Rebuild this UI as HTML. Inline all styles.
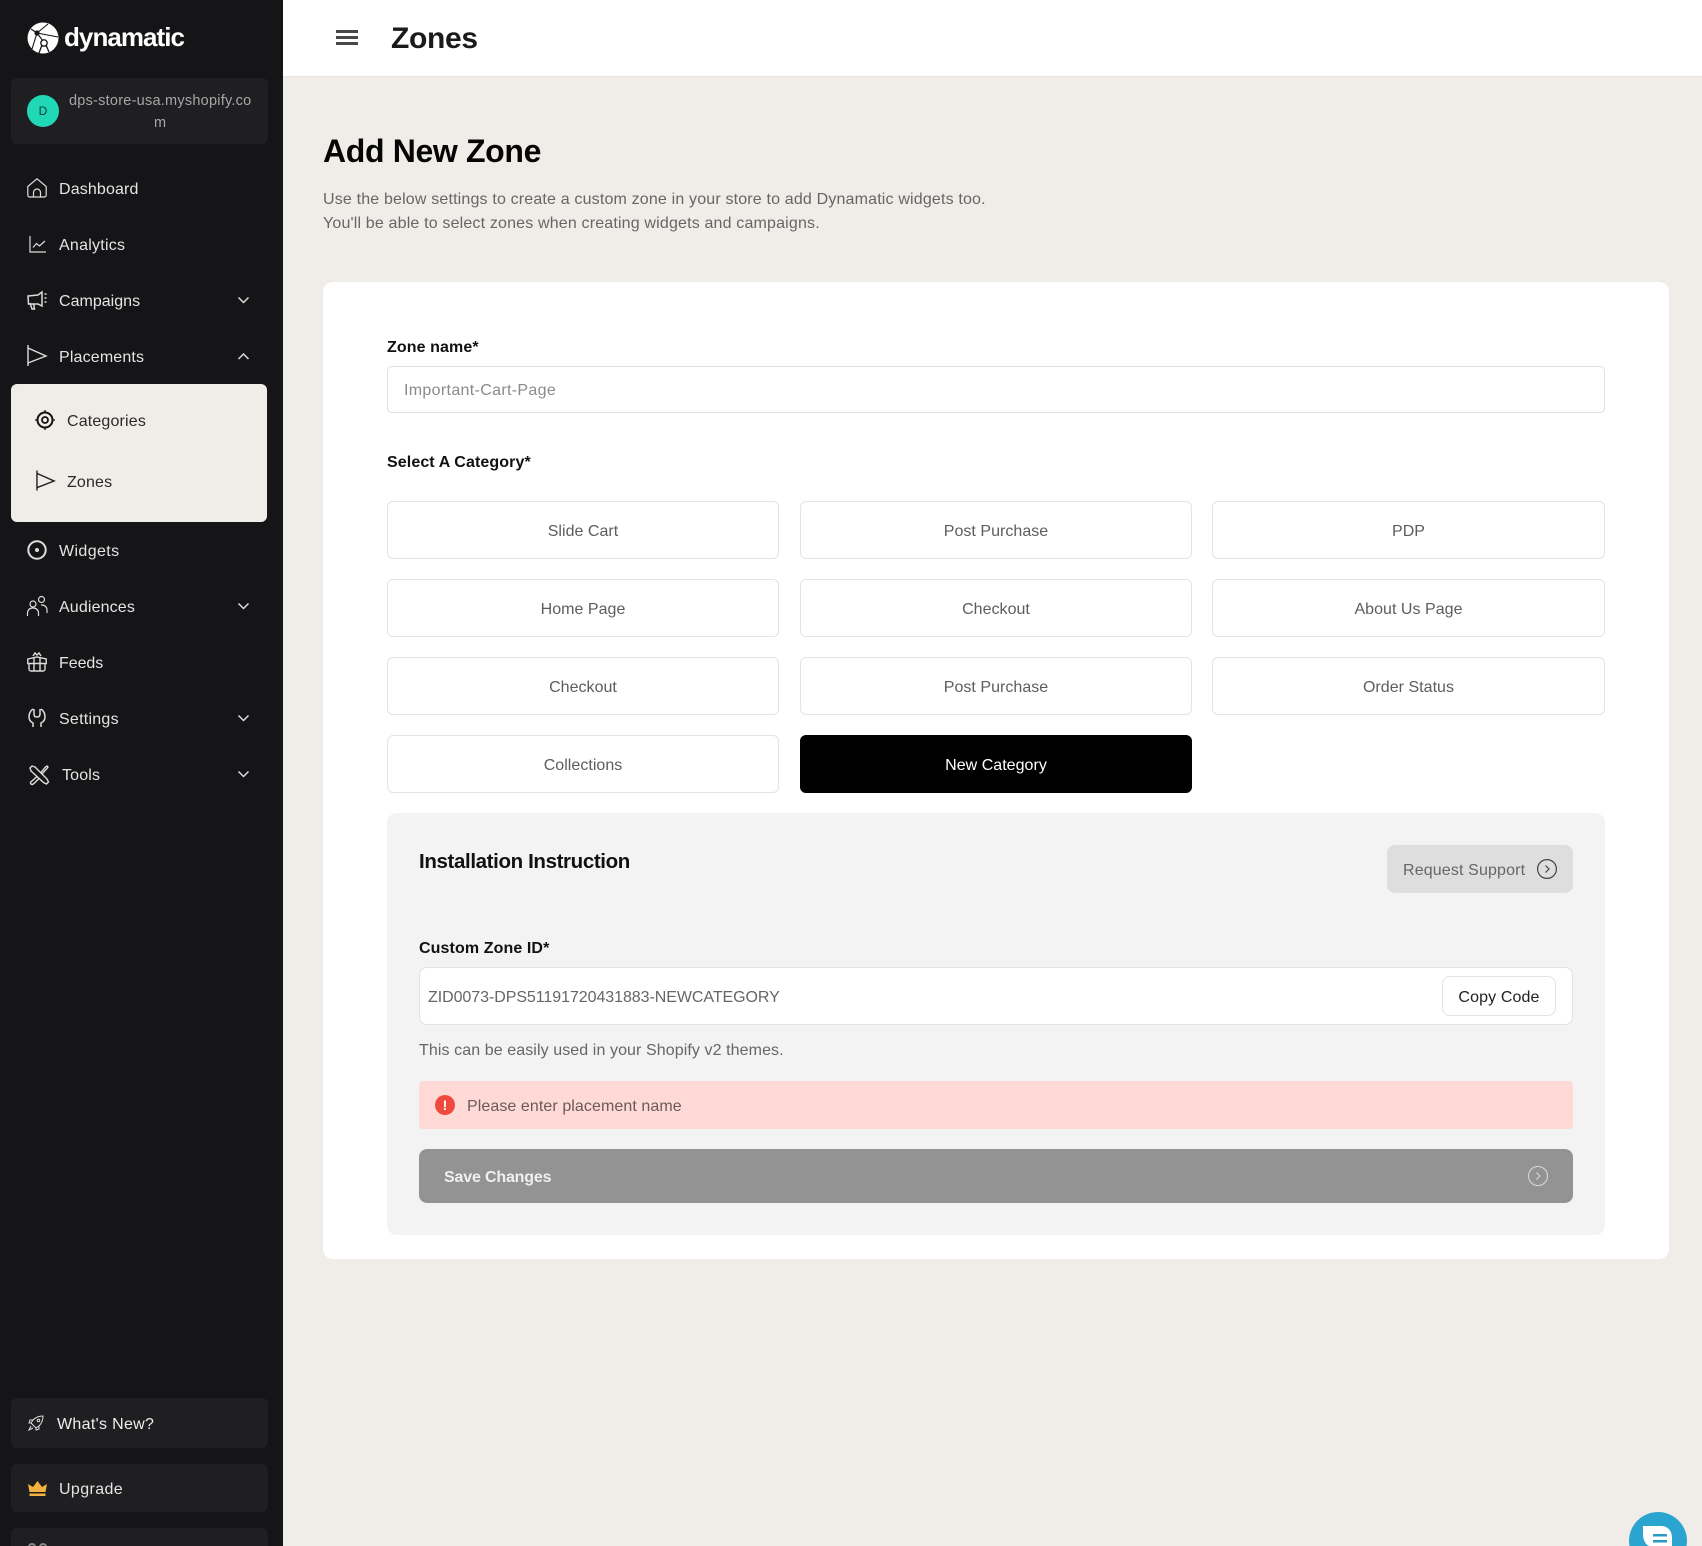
<!DOCTYPE html>
<html><head><meta charset="utf-8"><style>
*{box-sizing:border-box}
html,body{margin:0;padding:0;width:1702px;height:1546px;overflow:hidden}
#p{position:absolute;left:0;top:0;width:1702px;height:1546px;overflow:hidden;background:#f0ede8;font-family:"Liberation Sans",sans-serif}
.a,.t{position:absolute}
.t{white-space:nowrap;line-height:20px;height:20px;font-size:16px;margin-top:1.5px}
svg{position:absolute;overflow:visible}
.nav{color:#e4e4e4;left:59px}
.btn{position:absolute;width:392px;height:58px;background:#fff;border:1px solid #e6e4df;border-radius:6px;color:#5d5d5d;font-size:16px;line-height:59px;text-align:center;letter-spacing:.03px}
.lb{color:#111;font-weight:bold;letter-spacing:.1px}
</style></head><body><div id="p">
<div class="a" style="left:283px;top:0;width:1419px;height:77px;background:#fff;border-bottom:1px solid #e8e6e2"></div>
<div class="a" style="left:0;top:0;width:283px;height:1546px;background:#151517"></div>

<svg style="left:27px;top:22px" width="32" height="32" viewBox="0 0 32 32" fill="none"><circle cx="16" cy="16" r="15.500" fill="#fff"/><path d="M10 11L4 7M10 11L21 2M10 11L31 15M10 11L5 27M10 11L16 19" stroke="#151517" stroke-width="1.100"/><circle cx="10" cy="11" r="2.600" fill="#151517"/><path d="M15 23L12 31M19 23L22 30" stroke="#151517" stroke-width="1.300"/><circle cx="17" cy="21" r="3.200" fill="#fff" stroke="#151517" stroke-width="1.300"/></svg>
<div class="t" style="left:64px;top:25.500px;color:#fff;font-size:26px;font-weight:bold;letter-spacing:-.95px">dynamatic</div>

<div class="a" style="left:11px;top:78px;width:257px;height:66px;background:#1f1f22;border-radius:6px"></div>
<div class="a" style="left:27px;top:95px;width:32px;height:32px;border-radius:50%;background:#20d8b6;color:#0e3b35;font-size:12px;line-height:32px;text-align:center">D</div>
<div class="t" style="left:69px;top:89.500px;color:#a6a6a6;font-size:14.500px;letter-spacing:.24px">dps-store-usa.myshopify.co</div>
<div class="t" style="left:154px;top:111px;color:#a6a6a6;font-size:14.500px">m</div>

<svg style="left:27px;top:178px" width="20" height="20" viewBox="0 0 20 20" fill="none" stroke="#ddd" stroke-width="1.200"><path d="M.8 8.500L10 .8l9.200 7.700V17a2 2 0 0 1-2 2H2.800a2 2 0 0 1-2-2z"/><path d="M6.500 19v-4.500a3.500 3.500 0 0 1 7 0V19"/></svg>
<div class="t nav" style="top:178px;letter-spacing:.14px">Dashboard</div>
<svg style="left:29px;top:236px" width="17" height="17" viewBox="0 0 17 17" fill="none" stroke="#ddd" stroke-width="1.200"><path d="M1 0v16h16M4 11.500l3.500-4 3 2.500L16 5"/></svg>
<div class="t nav" style="top:234px;letter-spacing:.25px">Analytics</div>
<svg style="left:27px;top:290px" width="20" height="20" viewBox="0 0 20 20" fill="none" stroke="#ddd" stroke-width="1.500"><path d="M1 6l10-1 4-3v14l-4-2H1.500zM3 13l2 6h2.500L6.500 13.500M17.500 4h2M17.500 8h2M17.500 12h2"/></svg>
<div class="t nav" style="top:290px;letter-spacing:.02px">Campaigns</div>
<svg style="left:27px;top:346px" width="20" height="20" viewBox="0 0 20 20" fill="none" stroke="#ddd" stroke-width="1.400"><path d="M1 -1v21M1 2l18 8L1 17"/></svg>
<div class="t nav" style="top:346px;letter-spacing:.16px">Placements</div>

<div class="a" style="left:11px;top:384px;width:256px;height:138px;background:#f0ede8;border-radius:6px"></div>
<svg style="left:35px;top:410px" width="20" height="20" viewBox="0 0 20 20" fill="none" stroke="#111"><circle cx="10" cy="10" r="7.500" stroke-width="2"/><circle cx="10" cy="10" r="3" stroke-width="1.800"/><path d="M10 0v2M10 18v2M0 10h2M18 10h2" stroke-width="1.300"/></svg>
<div class="t" style="left:67px;top:410px;color:#2a2a2a;letter-spacing:.16px">Categories</div>
<svg style="left:36px;top:471px" width="19" height="20" viewBox="0 0 20 20" fill="none" stroke="#222" stroke-width="1.500"><path d="M1 -1v21M1 2l18 8L1 17"/></svg>
<div class="t" style="left:67px;top:471px;color:#2a2a2a;letter-spacing:.16px">Zones</div>

<svg style="left:27px;top:540px" width="20" height="20" viewBox="0 0 20 20" fill="none"><circle cx="10" cy="10" r="8.700" stroke="#ddd" stroke-width="2"/><circle cx="10" cy="10" r="2" fill="#ddd"/></svg>
<div class="t nav" style="top:540px;letter-spacing:.38px">Widgets</div>
<svg style="left:27px;top:596px" width="20" height="20" viewBox="0 0 20 20" fill="none" stroke="#ddd" stroke-width="1.200"><circle cx="6" cy="8" r="3"/><circle cx="14.500" cy="3.500" r="3"/><path d="M.5 20v-3a5 5 0 0 1 5-5h1a5 5 0 0 1 5 5v3M14 9h1a5 5 0 0 1 5 5v3"/></svg>
<div class="t nav" style="top:596px;letter-spacing:.14px">Audiences</div>
<svg style="left:27px;top:652px" width="20" height="20" viewBox="0 0 20 20" fill="none" stroke="#ddd" stroke-width="1.400"><path d="M.8 7L10 5l9.200 2v4.500H.8zM2 11.500V17a2 2 0 0 0 2 2h12a2 2 0 0 0 2-2v-5.500M7 5.800V19M13 5.800V19M6 4l2-3 2 2 2-2 2 3"/></svg>
<div class="t nav" style="top:652px;letter-spacing:-.05px">Feeds</div>
<svg style="left:28px;top:708px" width="18" height="20" viewBox="0 0 18 20" fill="none" stroke="#ddd" stroke-width="1.500"><path d="M5 1C2 3 1 6 1 9c0 3 2 5 4 6v4M13 1c3 2 4 5 4 8 0 3-2 5-4 6v4M6 1v5c0 2 1 3 3 3s3-1 3-3V1"/></svg>
<div class="t nav" style="top:708px;letter-spacing:.25px">Settings</div>
<svg style="left:29px;top:765px" width="20" height="20" viewBox="0 0 20 20" fill="none" stroke="#ddd" stroke-width="1.400"><path d="M1 3l2-2 3 1 12 12 1.500 3-2 2-3-1.500L2 6zM12 7.500l4.500-5.500 1.500-1 1 1-1 1.500-5 5.500M8 11.500L3 16c-2 1-2 3 0 3.500 1 0 2-1 2.500-1.500l5-5"/></svg>
<div class="t nav" style="top:764px;left:62px;letter-spacing:.16px">Tools</div>

<svg style="left:238px;top:297px" width="11" height="7" viewBox="0 0 11 7" fill="none" stroke="#ddd" stroke-width="1.500"><path d="M.5.5l5 5 5-5"/></svg>
<svg style="left:238px;top:353px" width="11" height="7" viewBox="0 0 11 7" fill="none" stroke="#ddd" stroke-width="1.500"><path d="M.5 6l5-5 5 5"/></svg>
<svg style="left:238px;top:603px" width="11" height="7" viewBox="0 0 11 7" fill="none" stroke="#ddd" stroke-width="1.500"><path d="M.5.5l5 5 5-5"/></svg>
<svg style="left:238px;top:715px" width="11" height="7" viewBox="0 0 11 7" fill="none" stroke="#ddd" stroke-width="1.500"><path d="M.5.5l5 5 5-5"/></svg>
<svg style="left:238px;top:771px" width="11" height="7" viewBox="0 0 11 7" fill="none" stroke="#ddd" stroke-width="1.500"><path d="M.5.5l5 5 5-5"/></svg>

<div class="a" style="left:11px;top:1398px;width:257px;height:50px;background:#1f1f21;border-radius:6px"></div>
<svg style="left:28px;top:1415px" width="16" height="16" viewBox="0 0 16 16" fill="none" stroke="#ddd" stroke-width="1"><path d="M5 5C8 2 12 1 15 1c0 3-1 7-4 10L8 13 3 8zM5 5H2L1 8h2M11 11v3l-3 1v-2M3 11l-2 4 4-2"/><circle cx="10.500" cy="5.500" r="1.300"/></svg>
<div class="t" style="left:57px;top:1413px;color:#eee;letter-spacing:.32px">What's New?</div>
<div class="a" style="left:11px;top:1464px;width:257px;height:48px;background:#1f1f21;border-radius:6px"></div>
<svg style="left:28px;top:1481px" width="19" height="15" viewBox="0 0 19 15"><path fill="#f2b23e" d="M0 3l5 3 4.500-6L14 6l5-3-1.500 8H1.500zM1.500 12.500h16V15h-16z"/></svg>
<div class="t nav" style="top:1478px;letter-spacing:.38px">Upgrade</div>
<div class="a" style="left:11px;top:1528px;width:257px;height:30px;background:#1f1f21;border-radius:6px"></div>
<svg style="left:28px;top:1544px" width="20" height="4" viewBox="0 0 20 4" fill="none" stroke="#888" stroke-width="2"><path d="M1 3a3 3 0 0 1 6 0M12 3a3 3 0 0 1 6 0"/></svg>

<svg style="left:336px;top:30px" width="22" height="15" viewBox="0 0 22 15"><rect fill="#484848" width="22" height="3" y="0"/><rect fill="#484848" width="22" height="3" y="6"/><rect fill="#484848" width="22" height="3" y="12"/></svg>
<div class="t" style="left:391px;top:27px;color:#1b1b1b;font-size:30px;font-weight:bold;letter-spacing:-.33px">Zones</div>

<div class="t" style="left:323px;top:139px;color:#050505;font-size:32px;font-weight:bold;letter-spacing:-.35px">Add New Zone</div>
<div class="t" style="left:323px;top:188px;color:#666;letter-spacing:.17px">Use the below settings to create a custom zone in your store to add Dynamatic widgets too.</div>
<div class="t" style="left:323px;top:212px;color:#666;letter-spacing:.17px">You'll be able to select zones when creating widgets and campaigns.</div>

<div class="a" style="left:323px;top:282px;width:1346px;height:977px;background:#fff;border-radius:10px"></div>
<div class="t lb" style="left:387px;top:336px">Zone name*</div>
<div class="a" style="left:387px;top:366px;width:1218px;height:47px;background:#fff;border:1px solid #dfdedb;border-radius:5px"></div>
<div class="t" style="left:404px;top:379px;color:#8a8a8a;letter-spacing:.33px">Important-Cart-Page</div>
<div class="t lb" style="left:387px;top:451px">Select A Category*</div>

<div class="btn" style="left:387px;top:501px">Slide Cart</div>
<div class="btn" style="left:800px;top:501px">Post Purchase</div>
<div class="btn" style="left:1212px;top:501px;width:393px">PDP</div>
<div class="btn" style="left:387px;top:579px">Home Page</div>
<div class="btn" style="left:800px;top:579px">Checkout</div>
<div class="btn" style="left:1212px;top:579px;width:393px">About Us Page</div>
<div class="btn" style="left:387px;top:657px">Checkout</div>
<div class="btn" style="left:800px;top:657px">Post Purchase</div>
<div class="btn" style="left:1212px;top:657px;width:393px">Order Status</div>
<div class="btn" style="left:387px;top:735px">Collections</div>
<div class="btn" style="left:800px;top:735px;background:#000;border-color:#000;color:#fff">New Category</div>

<div class="a" style="left:387px;top:813px;width:1218px;height:422px;background:#f3f3f3;border-radius:10px"></div>
<div class="t" style="left:419px;top:850px;color:#111;font-size:20.500px;font-weight:bold;letter-spacing:-.37px">Installation Instruction</div>
<div class="a" style="left:1387px;top:845px;width:186px;height:48px;background:#dedede;border-radius:8px"></div>
<div class="t" style="left:1403px;top:859px;color:#666;letter-spacing:.14px">Request Support</div>
<svg style="left:1537px;top:859px" width="20" height="20" viewBox="0 0 20 20" fill="none" stroke="#444" stroke-width="1.200"><circle cx="10" cy="10" r="9.400"/><path d="M8.500 6.500l3.500 3.500-3.500 3.500"/></svg>
<div class="t lb" style="left:419px;top:937px">Custom Zone ID*</div>
<div class="a" style="left:419px;top:967px;width:1154px;height:58px;background:#fff;border:1px solid #e4e3e0;border-radius:8px"></div>
<div class="t" style="left:428px;top:986px;color:#666;letter-spacing:-.06px">ZID0073-DPS51191720431883-NEWCATEGORY</div>
<div class="a" style="left:1442px;top:976px;width:114px;height:40px;background:#fff;border:1px solid #e4e3e0;border-radius:8px;color:#222;font-size:16px;line-height:41px;text-align:center;letter-spacing:.12px">Copy Code</div>
<div class="t" style="left:419px;top:1039px;color:#666;letter-spacing:.09px">This can be easily used in your Shopify v2 themes.</div>
<div class="a" style="left:419px;top:1081px;width:1154px;height:48px;background:#ffd9d6;border-radius:4px"></div>
<div class="a" style="left:435px;top:1095px;width:20px;height:20px;border-radius:50%;background:#f04a3e;color:#fff;font-size:14px;font-weight:bold;line-height:20px;text-align:center">!</div>
<div class="t" style="left:467px;top:1095px;color:#6a5a5a;letter-spacing:.08px">Please enter placement name</div>
<div class="a" style="left:419px;top:1149px;width:1154px;height:54px;background:#939393;border-radius:8px"></div>
<div class="t" style="left:444px;top:1166px;color:#f0f0f0;font-weight:bold;letter-spacing:-.17px">Save Changes</div>
<svg style="left:1528px;top:1166px" width="20" height="20" viewBox="0 0 20 20" fill="none" stroke="#dcdcdc" stroke-width="1"><circle cx="10" cy="10" r="9.500"/><path d="M8.500 6.500l3.500 3.500-3.500 3.500"/></svg>

<div class="a" style="left:1629px;top:1512px;width:58px;height:58px;border-radius:50%;background:#2ba4cf"></div>
<svg style="left:1642px;top:1526px" width="32" height="20" viewBox="0 0 32 20"><path fill="#fff" d="M1 0h18c7 0 11 5 11 12v8H8C4 20 1 14 1 8z"/><rect x="11" y="8" width="14" height="2.500" fill="#2a9bc4"/><rect x="11" y="14" width="14" height="2.500" fill="#2a9bc4"/></svg>
</div></body></html>
